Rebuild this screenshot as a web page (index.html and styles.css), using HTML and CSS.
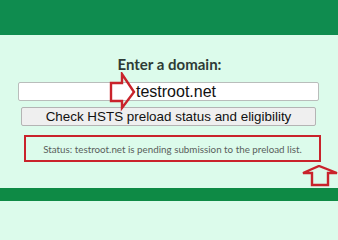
FILE: index.html
```html
<!DOCTYPE html>
<html>
<head>
<meta charset="utf-8">
<link rel="stylesheet" href="styles.css">
</head>
<body>
<div class="page">
  <header class="topbar"></header>
  <main class="content">
    <h1 class="title">Enter a domain:</h1>
    <div class="field">testroot.net</div>
    <div class="btn">Check HSTS preload status and eligibility</div>
    <div class="status">Status: testroot.net is pending submission to the preload list.</div>
  </main>
  <footer class="bottombar"></footer>
  <svg class="arrow arrow-right" width="30" height="40" viewBox="0 0 30 40">
    <path d="M2 11 L13 11 L13 2 L25 20 L13 36 L13 29 L2 29 Z" fill="none" stroke="#c9232b" stroke-width="2.4" stroke-linejoin="miter"/>
  </svg>
  <svg class="arrow arrow-up" width="40" height="26" viewBox="0 0 40 26">
    <path d="M18 1 L36 8 L27 8 L27 20 L11 20 L11 8 L2 8 Z" fill="none" stroke="#c9232b" stroke-width="2.4" stroke-linejoin="miter"/>
  </svg>
</div>
</body>
</html>
```

FILE: styles.css
```css
html, body {
  margin: 0;
  padding: 0;
  background: #dcfbeb;
}
body {
  width: 338px;
  height: 201px;
  overflow: hidden;
}
.page {
  position: relative;
  width: 338px;
  height: 201px;
  display: flex;
  flex-direction: column;
}
.topbar {
  height: 35px;
  flex: none;
  background: #0f8c4f;
}
.content {
  flex: 1;
  background: #dcfbeb;
  display: flex;
  flex-direction: column;
}
.title {
  margin: 19px 0 0 0;
  text-align: center;
  font-family: Lato, "Open Sans", sans-serif;
  font-weight: 700;
  font-size: 15px;
  line-height: 20px;
  color: #2e3b36;
  padding-left: 1px;
}
.field {
  margin: 8px 0 0 18px;
  height: 17px;
  width: 182px;
  background: #ffffff;
  border: 1px solid #b9bdbb;
  border-radius: 2px;
  font-family: "Liberation Sans", Arial, sans-serif;
  font-size: 16px;
  line-height: 17px;
  color: #111;
  padding-left: 117px;
}
.btn {
  margin: 6px 0 0 21px;
  width: 293px;
  height: 17px;
  background: #efefef;
  border: 1px solid #b4b4b4;
  border-radius: 2px;
  font-family: "Liberation Sans", Arial, sans-serif;
  font-size: 13.4px;
  line-height: 17px;
  color: #111;
  text-align: center;
  white-space: nowrap;
}
.status {
  margin: 9px 0 0 24px;
  width: 293px;
  height: 23px;
  border: 2.5px solid #c9232b;
  font-family: Lato, "Open Sans", sans-serif;
  font-size: 9.8px;
  line-height: 24px;
  color: #5a5f5c;
  text-align: center;
  white-space: nowrap;
}
.bottombar {
  height: 13px;
  flex: none;
  background: #0e8a45;
}
.arrow {
  position: absolute;
}
.arrow-right {
  left: 109px;
  top: 72px;
}
.arrow-up {
  left: 301px;
  top: 165px;
}
```
